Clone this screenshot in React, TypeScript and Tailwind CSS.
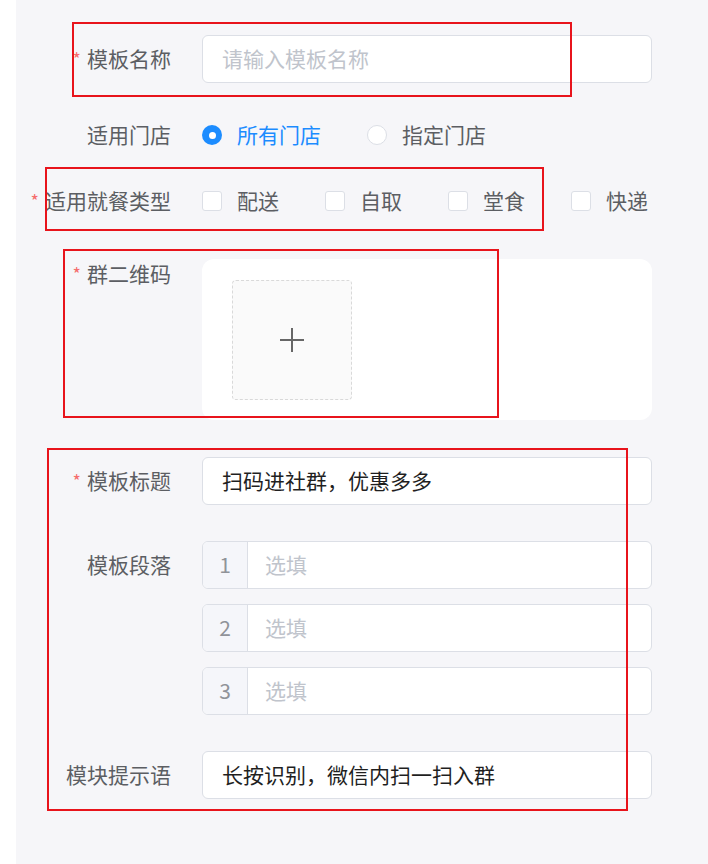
import React from "react";

const font = { fontFamily: '"Noto Sans CJK SC", "Noto Sans", sans-serif' };

const Star = () => (
  <span className="relative -top-[1px] mr-[6px] text-[18px] text-[#f56c6c]">*</span>
);

const Label = ({ text, required }: { text: string; required?: boolean }) => (
  <div className="w-[155px] shrink-0 h-12 flex items-center justify-end text-[21px] text-[#5c5e63]">
    {required && <Star />}
    {text}
  </div>
);

const TextInput = ({ value, placeholder }: { value?: string; placeholder?: string }) => (
  <div className="flex-1 h-12 flex items-center rounded-[6px] border border-[#dcdfe6] bg-white pl-[19px] text-[21px]">
    {value ? <span className="text-[#1f1f1f]">{value}</span> : <span className="text-[#c0c4cc]">{placeholder}</span>}
  </div>
);

const NumberedInput = ({ n }: { n: number }) => (
  <div className="h-12 flex rounded-[6px] border border-[#dcdfe6] bg-white overflow-hidden text-[21px]">
    <div className="w-[45px] shrink-0 flex items-center justify-center bg-[#f5f6fa] border-r border-[#dcdfe6] text-[#909399]">
      {n}
    </div>
    <div className="flex-1 flex items-center pl-[17px] text-[#c0c4cc]">选填</div>
  </div>
);

const Checkbox = ({ text }: { text: string }) => (
  <div className="flex items-center gap-[15px]">
    <span className="w-5 h-5 rounded-[3px] border border-[#dcdfe6] bg-white" />
    <span className="text-[#5c5e63]">{text}</span>
  </div>
);

const Marker = ({ cls }: { cls: string }) => (
  <div className={"absolute border-2 border-[#e8141c] pointer-events-none " + cls} />
);

export default function App() {
  return (
    <div className="relative flex min-h-[864px] w-full bg-white" style={font}>
      <div className="ml-4 flex-1 bg-[#f6f6f9] pr-[56px] pt-[35px] pb-[60px]">
        <div className="flex gap-[31px]">
          <Label text="模板名称" required />
          <TextInput placeholder="请输入模板名称" />
        </div>

        <div className="mt-[28px] flex gap-[31px]">
          <Label text="适用门店" />
          <div className="flex h-12 items-center gap-[46px] text-[21px]">
            <div className="flex items-center gap-[15px]">
              <span className="w-5 h-5 rounded-full bg-[#1c8cff] flex items-center justify-center">
                <span className="w-[7px] h-[7px] rounded-full bg-white" />
              </span>
              <span className="text-[#1c8cff]">所有门店</span>
            </div>
            <div className="flex items-center gap-[15px]">
              <span className="w-5 h-5 rounded-full border border-[#dcdfe6] bg-white" />
              <span className="text-[#5c5e63]">指定门店</span>
            </div>
          </div>
        </div>

        <div className="mt-[18px] flex gap-[31px]">
          <Label text="适用就餐类型" required />
          <div className="flex h-12 items-center gap-[46px] text-[21px] whitespace-nowrap">
            <Checkbox text="配送" />
            <Checkbox text="自取" />
            <Checkbox text="堂食" />
            <Checkbox text="快递" />
          </div>
        </div>

        <div className="mt-[34px] flex gap-[31px]">
          <div className="w-[155px] shrink-0 h-[30px] flex items-center justify-end text-[21px] text-[#5c5e63]">
            <Star />
            群二维码
          </div>
          <div className="flex-1 rounded-[12px] bg-white pl-[30px] pt-[21px] pb-[20px]">
            <div className="w-[120px] h-[120px] rounded-[4px] border border-dashed border-[#d9d9d9] bg-[#fafafa] flex items-center justify-center">
              <svg width="26" height="26" viewBox="0 0 26 26" fill="none" stroke="#666" strokeWidth="2">
                <path d="M13 1v24M1 13h24" />
              </svg>
            </div>
          </div>
        </div>

        <div className="mt-[37px] flex gap-[31px]">
          <Label text="模板标题" required />
          <TextInput value="扫码进社群，优惠多多" />
        </div>

        <div className="mt-[36px] flex gap-[31px]">
          <Label text="模板段落" />
          <div className="flex-1 flex flex-col gap-[15px]">
            <NumberedInput n={1} />
            <NumberedInput n={2} />
            <NumberedInput n={3} />
          </div>
        </div>

        <div className="mt-[36px] flex gap-[31px]">
          <Label text="模块提示语" />
          <TextInput value="长按识别，微信内扫一扫入群" />
        </div>
      </div>

      <Marker cls="left-[72px] top-[22px] w-[500px] h-[75px]" />
      <Marker cls="left-[45px] top-[167px] w-[499px] h-[64px]" />
      <Marker cls="left-[63px] top-[249px] w-[436px] h-[169px]" />
      <Marker cls="left-[47px] top-[448px] w-[581px] h-[363px]" />
    </div>
  );
}
